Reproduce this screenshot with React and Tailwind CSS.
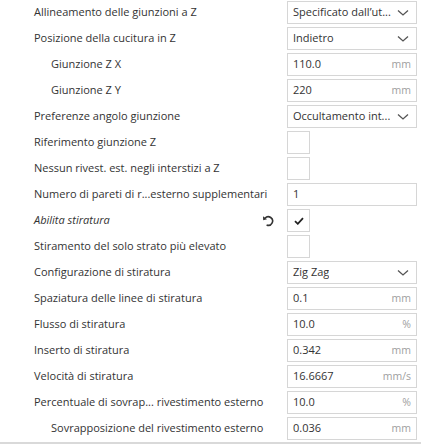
import React from 'react';

const rows = [
  { label: 'Allineamento delle giunzioni a Z', type: 'select', value: 'Specificato dall’ut...' },
  { label: 'Posizione della cucitura in Z', type: 'select', value: 'Indietro' },
  { label: 'Giunzione Z X', indent: true, type: 'input', value: '110.0', unit: 'mm' },
  { label: 'Giunzione Z Y', indent: true, type: 'input', value: '220', unit: 'mm' },
  { label: 'Preferenze angolo giunzione', type: 'select', value: 'Occultamento int...' },
  { label: 'Riferimento giunzione Z', type: 'check' },
  { label: 'Nessun rivest. est. negli interstizi a Z', type: 'check' },
  { label: 'Numero di pareti di r...esterno supplementari', type: 'input', value: '1' },
  { label: 'Abilita stiratura', italic: true, reset: true, type: 'check', checked: true },
  { label: 'Stiramento del solo strato più elevato', type: 'check' },
  { label: 'Configurazione di stiratura', type: 'select', value: 'Zig Zag' },
  { label: 'Spaziatura delle linee di stiratura', type: 'input', value: '0.1', unit: 'mm' },
  { label: 'Flusso di stiratura', type: 'input', value: '10.0', unit: '%' },
  { label: 'Inserto di stiratura', type: 'input', value: '0.342', unit: 'mm' },
  { label: 'Velocità di stiratura', type: 'input', value: '16.6667', unit: 'mm/s' },
  { label: 'Percentuale di sovrap... rivestimento esterno', type: 'input', value: '10.0', unit: '%' },
  { label: 'Sovrapposizione del rivestimento esterno', indent: true, type: 'input', value: '0.036', unit: 'mm' },
];

function Chevron() {
  return (
    <svg width="12" height="8" viewBox="0 0 12 8" className="shrink-0">
      <path d="M1 1.5 L6 6 L11 1.5" fill="none" stroke="#555" strokeWidth="1.3" />
    </svg>
  );
}

function ResetIcon() {
  return (
    <svg width="13" height="13" viewBox="0 0 13 13" className="shrink-0">
      <path d="M3 4.2 A4.3 4.3 0 1 1 4.6 11" fill="none" stroke="#333" strokeWidth="1.6" />
      <path d="M1 2.2 L1.2 6.2 L5 5.2 Z" fill="#333" />
    </svg>
  );
}

function Control({ row }) {
  if (row.type === 'check') {
    return (
      <div className="flex h-[23px] w-[23px] items-center justify-center border border-[#d6d6d6] bg-white">
        {row.checked && (
          <svg width="10" height="8" viewBox="0 0 10 8">
            <path d="M1 4.2 L3.8 6.8 L9 1.2" fill="none" stroke="#222" strokeWidth="1.8" />
          </svg>
        )}
      </div>
    );
  }
  if (row.type === 'select') {
    return (
      <div className="flex h-[23px] w-[130px] items-center justify-between border border-[#d6d6d6] bg-white pl-[5px] pr-[7px]">
        <span className="truncate text-[#333]">{row.value}</span>
        <Chevron />
      </div>
    );
  }
  return (
    <div className="flex h-[23px] w-[130px] items-center justify-between border border-[#d6d6d6] bg-white px-[5px]">
      <span className="text-[#333]">{row.value}</span>
      {row.unit && <span className="text-[10.5px] text-[#a0a0a0]">{row.unit}</span>}
    </div>
  );
}

export default function App() {
  return (
    <div
      className="h-[444px] w-[421px] overflow-hidden bg-white text-[11px] text-[#333]"
      style={{ fontFamily: '"Open Sans", "Noto Sans", sans-serif' }}
    >
      <div className="border-b-2 border-[#d9d9d9]">
        {rows.map((row) => (
          <div key={row.label} className="flex h-[26px] pb-[2px] pt-[1px]">
            <div className={`flex flex-1 items-center justify-between pr-[12px] ${row.indent ? 'pl-[51px]' : 'pl-[34px]'}`}>
              <span className={`whitespace-nowrap ${row.italic ? 'italic' : ''}`}>{row.label}</span>
              {row.reset && <ResetIcon />}
            </div>
            <div className="w-[134px] shrink-0 pr-[4px]">
              <Control row={row} />
            </div>
          </div>
        ))}
      </div>
    </div>
  );
}
